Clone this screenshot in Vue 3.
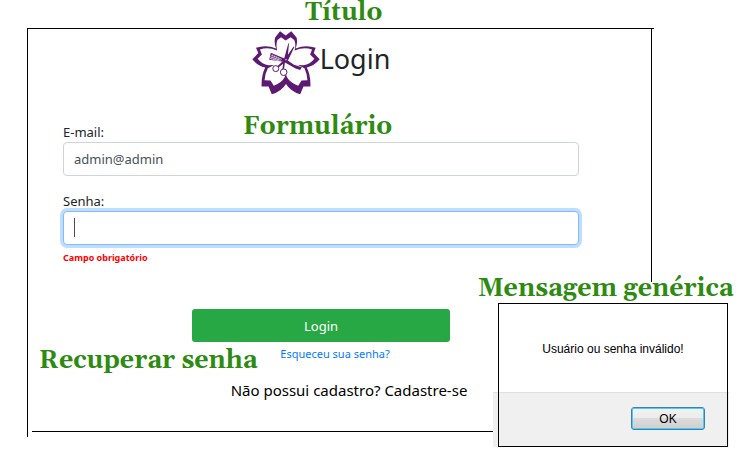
<script setup>
import { ref } from 'vue'

const email = ref('admin@admin')
const password = ref('')
</script>

<template>
  <div class="page">
    <main class="panel">
      <header class="brand">
        <svg class="logo" viewBox="24 16 204 194" aria-hidden="true">
          <path fill="#5c1a72" fill-rule="evenodd" d="M108 17L125 30L142 17L158 36Q162 52 155 69Q185 57 216 67L210 83L228 102Q212 122 189 127Q201 150 200 184L179 184L169 208Q140 200 126 177Q112 200 83 208L73 184L52 184Q51 150 63 127Q40 122 24 102L42 83L35 67Q66 57 96 69Q89 52 93 36ZM111 35L100 43Q95 57 99 75Q72 64 47 72L53 87L40 100Q54 117 73 120L90 119L71 129Q62 146 61 165L79 166L89 182Q113 172 122 156L125 145L129 156Q138 172 163 182L173 166L191 165Q190 146 182 129L162 119L179 120Q199 117 212 100L199 87L205 72Q180 64 152 75Q157 57 151 43L140 35L125 45Z" />
          <path fill="#5c1a72" d="M80 82L125 101L150 118L174 126L169 134L155 130L119 109L75 103Z" />
          <path stroke="#fff" stroke-width="2" d="M81 89L113 102M78 94L110 105M77 99L106 107" />
          <path stroke="#fff" stroke-width="1" d="M86 86L82 102M92 89L88 103M98 91L94 104M104 94L100 105" />
          <path fill="#5c1a72" d="M133 54L135 54L131 98L123 109L120 132L115 132L119 105ZM149 63L151 65L133 103L103 127L100 123L123 101Z" />
          <circle cx="95" cy="130" r="9" fill="#fff" stroke="#5c1a72" stroke-width="3" />
          <circle cx="119" cy="141" r="10" fill="#fff" stroke="#5c1a72" stroke-width="3" />
          <circle cx="126" cy="103" r="2" fill="#fff" />
        </svg>
        <h1>Login</h1>
      </header>

      <form class="form" @submit.prevent>
        <div class="field">
          <label for="email">E-mail:</label>
          <input id="email" v-model="email" type="email">
        </div>
        <div class="field active">
          <label for="password">Senha:</label>
          <div class="control">
            <input id="password" v-model="password" type="password" aria-describedby="password-error">
            <span class="caret"></span>
          </div>
          <p id="password-error" class="error">Campo obrigatório</p>
        </div>
        <button class="submit" type="submit">Login</button>
        <a class="forgot" href="#">Esqueceu sua senha?</a>
        <a class="register" href="#">Não possui cadastro? Cadastre-se</a>
      </form>
    </main>

    <span class="note note-title">Título</span>
    <span class="note note-form">Formulário</span>
    <span class="note note-recover">Recuperar senha</span>
    <span class="note note-message">Mensagem genérica</span>

    <section class="dialog" role="alertdialog" aria-labelledby="message">
      <p id="message">Usuário ou senha inválido!</p>
      <div class="actions">
        <button type="button">OK</button>
      </div>
    </section>
  </div>
</template>

<style>
body {
  background: #fff;
}
</style>

<style scoped>
.page {
  position: relative;
  padding: 28px 91px 30px 27px;
  font-family: "Noto Sans", "Open Sans", sans-serif;
  color: #212529;
}

.panel {
  position: relative;
  padding: 0 75px 35px 35px;
  border-top: 1px solid #000;
  border-left: 1px solid #000;
}

.panel::before {
  content: "";
  position: absolute;
  top: 0;
  right: 2px;
  height: 253px;
  border-right: 1px solid #000;
}

.panel::after {
  content: "";
  position: absolute;
  left: 4px;
  right: 156px;
  bottom: 5px;
  border-bottom: 1px solid #000;
}

.brand {
  display: flex;
  justify-content: center;
  height: 94px;
}

.logo {
  width: 68px;
  height: 64px;
  margin-top: 2px;
}

h1 {
  margin: 12px 0 0;
  font-size: 27px;
  font-weight: 400;
  line-height: 36px;
}

.form {
  display: flex;
  flex-direction: column;
}

.field {
  display: flex;
  flex-direction: column;
  font-size: 13px;
  margin-bottom: 16px;
}

.field label {
  line-height: 19px;
}

.field input {
  box-sizing: border-box;
  width: 100%;
  height: 34px;
  padding: 0 10px;
  border: 1px solid #ced4da;
  border-radius: 4px;
  outline: 0;
  background: #fff;
  color: #495057;
  font: inherit;
}

.control {
  display: flex;
  position: relative;
}

.field.active {
  margin-bottom: 43px;
}

.field.active input {
  border-color: #80bdff;
  box-shadow: 0 0 0 3px #bfdeff;
}

.caret {
  position: absolute;
  top: 7px;
  left: 11px;
  width: 1px;
  height: 19px;
  background: #495057;
}

.error {
  margin: 5px 0 0;
  color: #f00;
  font-size: 9px;
  font-weight: 700;
  line-height: 16px;
}

.submit {
  align-self: center;
  width: 50%;
  height: 33px;
  padding: 0;
  border: 0;
  border-radius: 3px;
  background: #28a745;
  color: #fff;
  font: inherit;
  font-size: 13px;
}

.forgot,
.register {
  align-self: center;
  text-decoration: none;
}

.forgot {
  margin-left: 28px;
  color: #007bff;
  font-size: 11px;
  line-height: 24px;
}

.register {
  margin: 12px 0 0 56px;
  color: #000;
  font-size: 15px;
  line-height: 24px;
}

.note {
  position: absolute;
  color: #2e8b12;
  font-family: Gelasio, Georgia, "Liberation Serif", serif;
  font-size: 25px;
  font-weight: 700;
  line-height: 26px;
  white-space: nowrap;
}

.note-title {
  top: 0;
  left: 305px;
}

.note-form {
  top: 114px;
  left: 243px;
}

.note-recover {
  top: 348px;
  left: 39px;
}

.note-message {
  top: 276px;
  left: 478px;
}

.dialog {
  position: absolute;
  top: 303px;
  left: 498px;
  width: 230px;
  background: #fff;
  color: #000;
  font-family: "Liberation Sans", Arial, sans-serif;
  font-size: 12px;
}

.dialog::after {
  content: "";
  position: absolute;
  inset: 0;
  border: 1px solid #000;
  pointer-events: none;
}

.dialog p {
  margin: 0;
  padding: 38px 0 34px;
  line-height: 17px;
  text-align: center;
}

.actions {
  display: flex;
  justify-content: flex-end;
  margin: 0 -1px 0 -5px;
  padding: 14px 24px 17px;
  border-top: 1px solid #dfdfdf;
  background: #f0f0f0;
}

.actions button {
  width: 74px;
  height: 23px;
  padding: 0;
  border: 1px solid #3c7fb1;
  border-radius: 3px;
  background: linear-gradient(#f2f2f2 0%, #ebebeb 50%, #dcdcdc 50%, #cfcfcf 100%);
  box-shadow: inset 0 0 0 1px #48d0f4;
  color: #000;
  font: inherit;
}
</style>
